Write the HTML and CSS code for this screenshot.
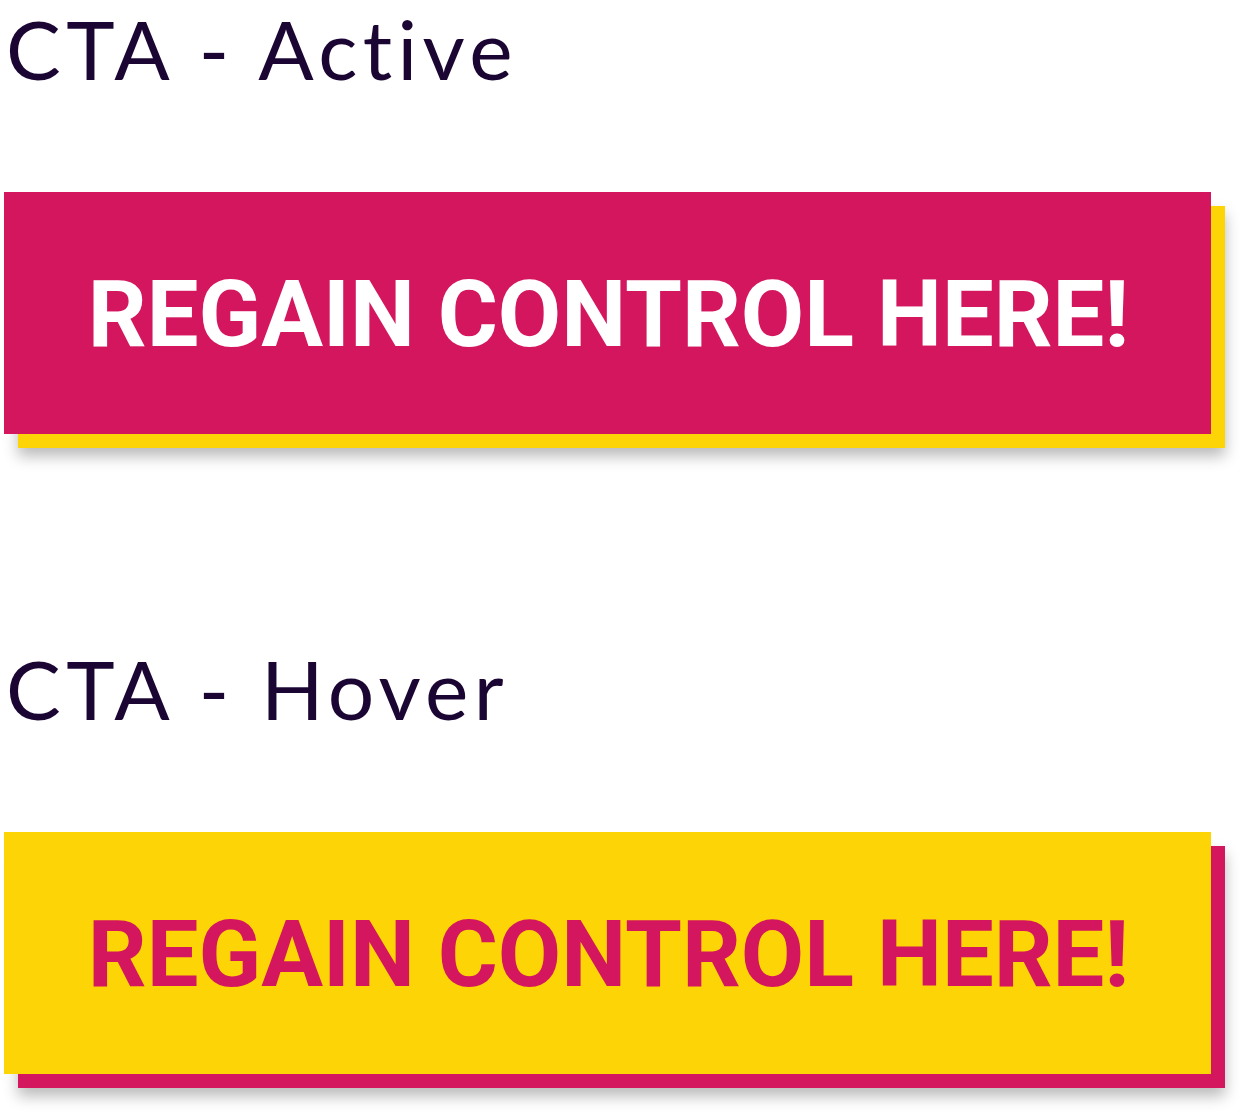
FILE: index.html
```html
<!DOCTYPE html>
<html>
<head>
<meta charset="utf-8">
<link rel="stylesheet" href="styles.css">
</head>
<body>
<main class="page">
  <section class="cta-block">
    <h2 class="cta-title">CTA - Active</h2>
    <a class="cta cta-active" href="#">REGAIN CONTROL HERE!</a>
  </section>
  <section class="cta-block">
    <h2 class="cta-title">CTA - Hover</h2>
    <a class="cta cta-hover" href="#">REGAIN CONTROL HERE!</a>
  </section>
</main>
</body>
</html>
```

FILE: styles.css
```css
html, body {
  margin: 0;
  padding: 0;
  background: #ffffff;
}
.page {
  display: flex;
  flex-direction: column;
  gap: 206px;
  padding-left: 4px;
  min-height: 1120px;
  box-sizing: border-box;
}
.cta-block {
  display: flex;
  flex-direction: column;
  align-items: flex-start;
  gap: 96px;
}
.cta-title {
  margin: 0;
  font-family: "Lato", sans-serif;
  font-weight: 400;
  font-size: 82px;
  line-height: 96px;
  height: 96px;
  color: #1a0533;
  padding-left: 2px;
  letter-spacing: 5.4px;
}
.cta {
  display: flex;
  align-items: center;
  justify-content: center;
  width: 1207px;
  height: 242px;
  text-decoration: none;
  font-family: "Roboto", sans-serif;
  font-weight: 700;
  font-size: 92px;
  line-height: 1;
  padding-left: 2px;
  padding-top: 4px;
  box-sizing: border-box;
}
.cta-active {
  background: #d4165e;
  color: #ffffff;
  box-shadow: 14px 14px 0 #fdd405, 14px 22px 14px rgba(0, 0, 0, 0.28);
}
.cta-hover {
  background: #fdd405;
  color: #d4165e;
  box-shadow: 14px 14px 0 #d4165e, 14px 22px 14px rgba(0, 0, 0, 0.28);
}
```
